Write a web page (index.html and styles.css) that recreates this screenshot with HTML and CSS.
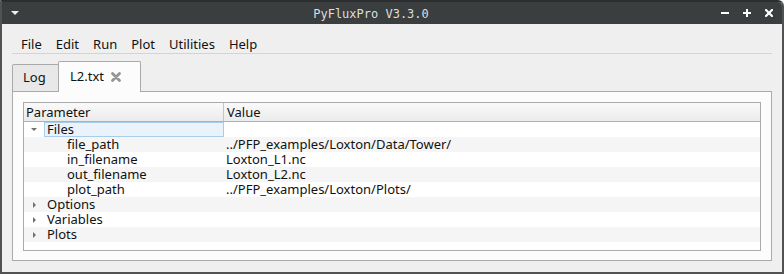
FILE: index.html
```html
<!DOCTYPE html>
<html lang="en">
<head>
    <meta charset="UTF-8">
    <title>PyFluxPro V3.3.0</title>
    <link rel="stylesheet" href="styles.css">
</head>

<body>
    <div class="window">
        <!-- Title bar -->
        <div class="titlebar">
            <div class="tb-left">
                <svg width="8" height="4" viewBox="0 0 8 4"><polygon points="0,0 8,0 4,4" fill="#eeeeee"/></svg>
            </div>
            <div class="tb-title">PyFluxPro V3.3.0</div>
            <div class="tb-right">
                <svg width="8" height="8" viewBox="0 0 8 8"><rect x="0" y="3" width="8" height="2" fill="#ffffff"/></svg>
                <svg width="8" height="8" viewBox="0 0 8 8"><rect x="0" y="3" width="8" height="2" fill="#ffffff"/><rect x="3" y="0" width="2" height="8" fill="#ffffff"/></svg>
                <svg width="8" height="8" viewBox="0 0 8 8"><path d="M1 1 L7 7 M7 1 L1 7" stroke="#ffffff" stroke-width="2.2" stroke-linecap="square"/></svg>
            </div>
        </div>

        <!-- Menu -->
        <div class="menubar">
            <span>File</span>
            <span>Edit</span>
            <span>Run</span>
            <span>Plot</span>
            <span>Utilities</span>
            <span>Help</span>
        </div>

        <!-- Tabs -->
        <div class="tabbar">
            <div class="tab">Log</div>
            <div class="tab active">
                <span>L2.txt</span>
                <svg class="tab-close" width="10" height="10" viewBox="0 0 10 10">
                    <path d="M1.5 1.5 L8.5 8.5 M8.5 1.5 L1.5 8.5" stroke="#8c8c8c" stroke-width="2.6" stroke-linecap="round"/>
                    <path d="M1.5 1.5 L8.5 8.5 M8.5 1.5 L1.5 8.5" stroke="#a6a6a6" stroke-width="0.8" stroke-linecap="round"/>
                </svg>
            </div>
        </div>

        <div class="pane">
            <div class="tree">
                <div class="tree-header">
                    <div class="col-name">Parameter</div>
                    <div class="col-value">Value</div>
                </div>

                <div class="row">
                    <div class="name"><span class="arrow"><svg width="6" height="3" viewBox="0 0 6 3"><polygon points="0,0 6,0 3,3" fill="#707070"/></svg></span><span class="label current">Files</span></div>
                    <div class="value"></div>
                </div>
                <div class="row alt">
                    <div class="name child"><span class="arrow"></span><span class="label">file_path</span></div>
                    <div class="value">../PFP_examples/Loxton/Data/Tower/</div>
                </div>
                <div class="row">
                    <div class="name child"><span class="arrow"></span><span class="label">in_filename</span></div>
                    <div class="value">Loxton_L1.nc</div>
                </div>
                <div class="row alt">
                    <div class="name child"><span class="arrow"></span><span class="label">out_filename</span></div>
                    <div class="value">Loxton_L2.nc</div>
                </div>
                <div class="row">
                    <div class="name child"><span class="arrow"></span><span class="label">plot_path</span></div>
                    <div class="value">../PFP_examples/Loxton/Plots/</div>
                </div>
                <div class="row alt">
                    <div class="name"><span class="arrow"><svg width="3" height="6" viewBox="0 0 3 6"><polygon points="0,0 3,3 0,6" fill="#707070"/></svg></span><span class="label">Options</span></div>
                    <div class="value"></div>
                </div>
                <div class="row">
                    <div class="name"><span class="arrow"><svg width="3" height="6" viewBox="0 0 3 6"><polygon points="0,0 3,3 0,6" fill="#707070"/></svg></span><span class="label">Variables</span></div>
                    <div class="value"></div>
                </div>
                <div class="row alt">
                    <div class="name"><span class="arrow"><svg width="3" height="6" viewBox="0 0 3 6"><polygon points="0,0 3,3 0,6" fill="#707070"/></svg></span><span class="label">Plots</span></div>
                    <div class="value"></div>
                </div>
            </div>
        </div>
    </div>
</body>
</html>
```

FILE: styles.css
```css
/* Reset */
* {
    margin: 0;
    padding: 0;
    box-sizing: border-box;
}

body {
    font-family: 'Noto Sans', sans-serif;
    font-size: 13px;
    color: #111111;
    background-color: #ffffff;
}

/* Window */
.window {
    width: 784px;
    height: 274px;
    background-color: #efefef;
    border: 2px solid #505354;
    border-top-color: #2c2e2f;
    border-top-right-radius: 6px;
    overflow: hidden;
}

/* Title bar */
.titlebar {
    display: flex;
    align-items: center;
    height: 22px;
    background-color: #3a3e3f;
}

.tb-left {
    width: 28px;
    display: flex;
    align-items: center;
    padding-left: 9px;
}

.tb-title {
    flex: 1;
    text-align: center;
    font-family: 'DejaVu Sans Mono', monospace;
    font-size: 12px;
    line-height: 22px;
    padding-top: 1px;
    color: #dedede;
}

.tb-right {
    width: 70px;
    display: flex;
    align-items: center;
    gap: 14px;
    padding-left: 9px;
}

.tb-right svg,
.tb-left svg {
    display: block;
}

/* Menu */
.menubar {
    display: flex;
    margin: 0 10px;
    padding: 11px 0 0 2px;
    height: 30px;
    line-height: 18px;
    border-bottom: 1px solid #d4d4d4;
}

.menubar span {
    padding: 0 7px;
}

/* Tabs */
.tabbar {
    display: flex;
    align-items: flex-end;
    margin: 7px 10px 0;
    height: 30px;
}

.tab {
    width: 47px;
    height: 27px;
    padding: 3px 0 0 10px;
    line-height: 18px;
    background-color: #e8e8e8;
    border: 1px solid #aaaaaa;
    border-bottom: none;
    border-top-left-radius: 2px;
}

.tab.active {
    position: relative;
    z-index: 1;
    display: flex;
    align-items: flex-start;
    width: 83px;
    height: 31px;
    margin-left: -1px;
    margin-bottom: -1px;
    padding: 5px 0 0 11px;
    background-color: #fcfcfc;
    border-top-right-radius: 2px;
}

.tab-close {
    display: block;
    margin: 5px 0 0 7px;
}

/* Tab pane */
.pane {
    margin: 0 10px;
    height: 170px;
    padding: 10px 10px 9px 10px;
    background-color: #fcfcfc;
    border: 1px solid #aaaaaa;
}

/* Tree */
.tree {
    height: 149px;
    background-color: #ffffff;
    border: 1px solid #aaaaaa;
}

.tree-header {
    display: flex;
    height: 19px;
    line-height: 18px;
    background: linear-gradient(#fafafa, #ebebeb);
    border-bottom: 1px solid #b0b0b0;
}

.tree-header .col-name {
    width: 200px;
    padding-left: 2px;
    border-right: 1px solid #c4c4c4;
}

.tree-header .col-value {
    flex: 1;
    padding-left: 3px;
}

.row {
    display: flex;
    height: 15px;
    line-height: 15px;
}

.row.alt {
    background-color: #f5f5f5;
}

.name {
    display: flex;
    width: 200px;
}

.name.child {
    padding-left: 20px;
}

.arrow {
    display: flex;
    align-items: center;
    justify-content: center;
    width: 20px;
    height: 15px;
}

.arrow svg {
    display: block;
}

.label {
    flex: 1;
    padding-left: 3px;
}

.label.current {
    background-color: #eaf3fb;
    box-shadow: inset 0 0 0 1px #a9cde8;
}

.value {
    flex: 1;
    padding-left: 2px;
}
```
